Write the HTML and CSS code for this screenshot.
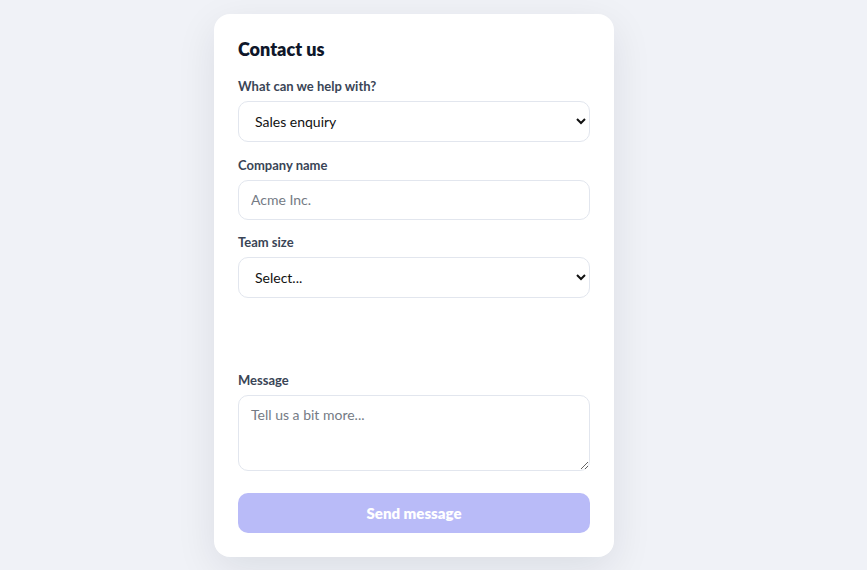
FILE: index.html
```html
<!DOCTYPE html>
<html lang="en">
<head>
    <meta charset="UTF-8">
    <meta name="viewport" content="width=device-width, initial-scale=1.0">
    <title>Contact us</title>
    <link rel="stylesheet" href="styles.css">
</head>
<body>
    <main class="page">
        <form class="contact-card">
            <h1>Contact us</h1>

            <div class="field">
                <label for="topic">What can we help with?</label>
                <select id="topic" class="control control-select">
                    <option>Sales enquiry</option>
                    <option>Support</option>
                    <option>Other</option>
                </select>
            </div>

            <div class="field">
                <label for="company">Company name</label>
                <input id="company" class="control" type="text" placeholder="Acme Inc.">
            </div>

            <div class="field">
                <label for="team">Team size</label>
                <select id="team" class="control control-select">
                    <option>Select...</option>
                    <option>1-10</option>
                    <option>11-50</option>
                    <option>51+</option>
                </select>
            </div>

            
            <div class="field-spacer"></div>

            <div class="field">
                <label for="message">Message</label>
                <textarea id="message" class="control control-area" placeholder="Tell us a bit more..."></textarea>
            </div>

            <button type="submit" class="send-btn" disabled>Send message</button>
        </form>
    </main>
</body>
</html>
```

FILE: styles.css
```css
body {
    margin: 0;
    min-height: 100vh;
    background-color: #f0f2f7;
    font-family: Lato, "Liberation Sans", sans-serif;
    color: #0f172a;
}

.page {
    display: flex;
    justify-content: center;
    padding-top: 14px;
    padding-right: 39px; /* la tarjeta queda algo a la izquierda del centro */
}

.contact-card {
    width: 400px;
    box-sizing: border-box;
    background-color: #fff;
    border-radius: 16px;
    padding: 24px;
    box-shadow: 0 12px 40px rgba(15, 23, 42, 0.09);
    display: flex;
    flex-direction: column;
    gap: 13.5px;
}

.contact-card h1 {
    margin: 0 0 3.5px;
    font-size: 18px;
    line-height: 22px;
    font-weight: 800;
    color: #0f172a;
}

.field {
    display: flex;
    flex-direction: column;
    gap: 6px;
}

.field label {
    font-size: 13px;
    line-height: 18px;
    font-weight: 700;
    color: #3a4556;
}

.control {
    width: 100%;
    box-sizing: border-box;
    height: 40px;
    border: 1px solid #e2e6ee;
    border-radius: 10px;
    padding: 0 12px;
    font-family: inherit;
    font-size: 14px;
    color: #111;
    background-color: #fff;
    outline: none;
}

.control::placeholder {
    color: #757b85;
}

.control-select {
    height: 41px;
    padding-left: 12px;
}

.control-area {
    height: 76px;
    padding: 10px 12px;
    resize: vertical;
}

.field-spacer {
    height: 46px;
}

.send-btn {
    margin-top: 8.5px;
    height: 40px;
    border: none;
    border-radius: 10px;
    background-color: #b9bbf8;
    color: #fff;
    font-family: inherit;
    font-size: 15px;
    font-weight: 800;
}
```
